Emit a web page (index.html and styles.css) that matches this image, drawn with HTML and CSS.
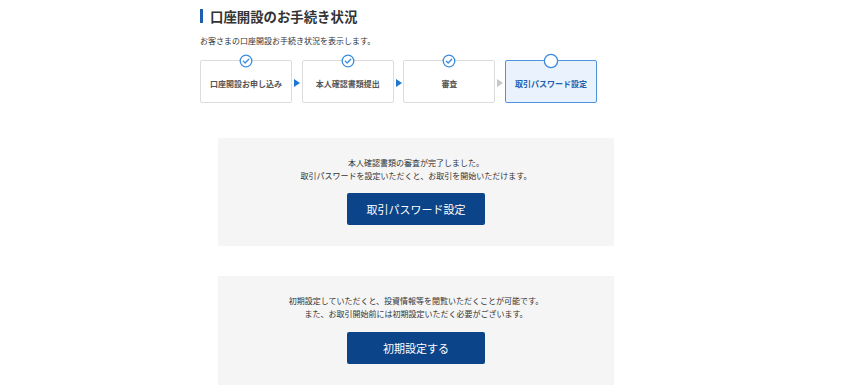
FILE: index.html
```html
<!DOCTYPE html>
<html lang="ja">
<head>
    <meta charset="UTF-8">
    <meta name="viewport" content="width=device-width, initial-scale=1.0">
    <title>口座開設のお手続き状況</title>
    <link rel="stylesheet" href="styles.css">
</head>
<body>
    <div class="page">
        <h1 class="title">口座開設のお手続き状況</h1>
        <p class="lead">お客さまの口座開設お手続き状況を表示します。</p>

        <ol class="steps">
            <li class="step done">
                <svg class="mark" width="14" height="14" viewBox="0 0 14 14"><circle cx="7" cy="7" r="5.8" fill="#fff" stroke="#3b8be0" stroke-width="1.3"/><polyline points="4.3,7.2 6.2,9 9.7,5.2" fill="none" stroke="#3b8be0" stroke-width="1.3" stroke-linecap="round" stroke-linejoin="round"/></svg>
                <span>口座開設お申し込み</span>
            </li>
            <li class="arrow on"></li>
            <li class="step done">
                <svg class="mark" width="14" height="14" viewBox="0 0 14 14"><circle cx="7" cy="7" r="5.8" fill="#fff" stroke="#3b8be0" stroke-width="1.3"/><polyline points="4.3,7.2 6.2,9 9.7,5.2" fill="none" stroke="#3b8be0" stroke-width="1.3" stroke-linecap="round" stroke-linejoin="round"/></svg>
                <span>本人確認書類提出</span>
            </li>
            <li class="arrow on"></li>
            <li class="step done">
                <svg class="mark" width="14" height="14" viewBox="0 0 14 14"><circle cx="7" cy="7" r="5.8" fill="#fff" stroke="#3b8be0" stroke-width="1.3"/><polyline points="4.3,7.2 6.2,9 9.7,5.2" fill="none" stroke="#3b8be0" stroke-width="1.3" stroke-linecap="round" stroke-linejoin="round"/></svg>
                <span>審査</span>
            </li>
            <li class="arrow"></li>
            <li class="step current">
                <svg class="mark" width="16" height="16" viewBox="0 0 16 16"><circle cx="8" cy="8" r="6.6" fill="#fff" stroke="#3b8be0" stroke-width="1.3"/></svg>
                <span>取引パスワード設定</span>
            </li>
        </ol>

        <section class="panel">
            <p class="panel-text">本人確認書類の審査が完了しました。<br>取引パスワードを設定いただくと、お取引を開始いただけます。</p>
            <button class="btn">取引パスワード設定</button>
        </section>

        <section class="panel second">
            <p class="panel-text">初期設定していただくと、投資情報等を閲覧いただくことが可能です。<br>また、お取引開始前には初期設定いただく必要がございます。</p>
            <button class="btn">初期設定する</button>
        </section>
    </div>
</body>
</html>
```

FILE: styles.css
```css
body {
    margin: 0;
    background-color: #fff;
    color: #333;
    font-family: "Noto Sans CJK JP", "Noto Sans", sans-serif;
}

.page {
    padding: 9px 0 0 200px;
}

.title {
    margin: 0;
    padding-left: 7px;
    border-left: 3px solid #1d5fae;
    font-size: 13.4px;
    line-height: 14px;
    font-weight: bold;
    color: #333;
}

.lead {
    margin: 12px 0 0;
    font-size: 8px;
    line-height: 12px;
}

.steps {
    display: flex;
    list-style: none;
    margin: 13px 0 0;
    padding: 0;
}

.step {
    position: relative;
    width: 92px;
    height: 43px;
    box-sizing: border-box;
    border: 1px solid #dcdcdc;
    border-radius: 2px;
    background-color: #fff;
    display: flex;
    align-items: center;
    justify-content: center;
    padding-top: 3px;
    font-size: 8px;
    font-weight: bold;
    color: #555;
}

.step .mark {
    position: absolute;
    top: -7px;
    left: 50%;
    margin-left: -7px;
}

.step.current .mark {
    top: -8px;
    margin-left: -8px;
}

.step.current {
    border-color: #4d94e0;
    background-color: #eaf3fd;
    color: #1d5fae;
}

.arrow {
    width: 9.7px;
    display: flex;
    align-items: center;
    justify-content: center;
    padding-top: 3px;
}

.arrow::before {
    content: "";
    border-style: solid;
    border-width: 4px 0 4px 6px;
    border-color: transparent transparent transparent #c6c6c6;
}

.arrow.on::before {
    border-left-color: #1f77d0;
}

.panel {
    width: 396px;
    margin: 35px 0 0 18px;
    padding: 18px 0 21px;
    background-color: #f5f5f5;
    text-align: center;
}

.panel.second {
    margin-top: 30px;
    padding-top: 19px;
}

.panel-text {
    margin: 0 0 11px;
    font-size: 8px;
    line-height: 13px;
    color: #333;
}

.second .panel-text {
    line-height: 12.5px;
    margin-bottom: 12px;
}

.btn {
    width: 138px;
    height: 32px;
    border: none;
    border-radius: 2px;
    background-color: #0b4488;
    color: #fff;
    font-family: inherit;
    font-size: 11px;
    cursor: pointer;
}

.btn:hover {
    opacity: 0.85;
}
```
